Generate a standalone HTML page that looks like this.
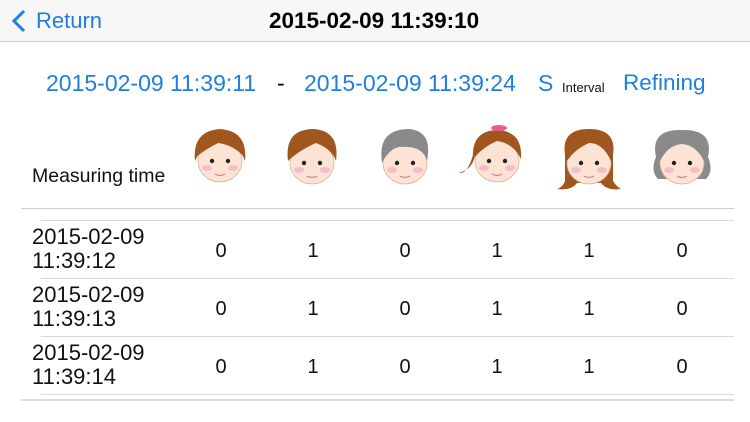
<!DOCTYPE html><html><head><style>
body{margin:0;width:750px;height:422px;background:#fff;position:relative;overflow:hidden;font-family:"Liberation Sans",sans-serif}
.a{position:absolute;white-space:nowrap}
.b{color:#1f7fe0}
.l{position:absolute;height:1px;background:#d8d8d8}
.t{font-size:22px;color:#111;line-height:24px}
.v{font-size:20px;color:#111;width:30px;text-align:center}
</style></head><body>
<div class="a" style="left:0;top:0;width:750px;height:41px;background:#f7f7f8;border-bottom:1px solid #c8c8cc"></div>
<svg class="a" style="left:11px;top:9px" width="16" height="24"><path d="M13 2 L3 12 L13 22" fill="none" stroke="#1f7fe0" stroke-width="3"/></svg>
<div class="a b" style="left:36px;top:8px;font-size:22px">Return</div>
<div class="a" style="left:269px;top:8px;font-size:22.5px;font-weight:bold;color:#000">2015-02-09 11:39:10</div>
<div class="a b" style="left:46px;top:70px;font-size:23px">2015-02-09 11:39:11</div>
<div class="a" style="left:277px;top:70px;font-size:23px">-</div>
<div class="a b" style="left:304px;top:70px;font-size:23px">2015-02-09 11:39:24</div>
<div class="a b" style="left:538px;top:70px;font-size:23px">S</div>
<div class="a" style="left:562px;top:80px;font-size:13px;color:#111">Interval</div>
<div class="a b" style="left:623px;top:70px;font-size:22.5px">Refining</div>
<div class="a" style="left:32px;top:165px;font-size:19.5px;color:#111">Measuring time</div>

<svg class="a" style="left:0;top:115px" width="750" height="85">
<defs><g id="f"><ellipse cx="0" cy="6" rx="22" ry="21" fill="#fde3d3" stroke="#d8b49c" stroke-width="0.8"/><circle cx="-8" cy="6" r="2.2" fill="#222"/><circle cx="8" cy="6" r="2.2" fill="#222"/><ellipse cx="-13" cy="13" rx="5" ry="3" fill="#f6bccc"/><ellipse cx="13" cy="13" rx="5" ry="3" fill="#f6bccc"/><path d="M-5 19 Q0 22 5 19" stroke="#d87a9a" stroke-width="1.3" fill="none"/></g></defs>
<g transform="translate(220,40)"><path d="M-25 6 Q-28 -24 0 -26 Q28 -24 25 6 L20 -6 Q0 -10 -20 -4Z" fill="#a0561f"/><use href="#f"/><path d="M-24 2 Q-26 -24 0 -25 Q26 -24 24 2 Q14 -10 -2 -12 Q-14 -6 -24 2Z" fill="#a0561f"/></g>
<g transform="translate(312,42)"><use href="#f"/><path d="M-24 4 Q-28 -28 2 -28 Q28 -26 24 4 Q20 -8 4 -14 Q-14 -6 -24 4Z" fill="#a0561f"/></g>
<g transform="translate(405,42)"><use href="#f"/><path d="M-23 6 Q-28 -28 4 -28 Q28 -26 22 4 Q18 -12 -6 -10 Q-16 -8 -23 6Z" fill="#8a8a8a"/></g>
<g transform="translate(497,40)"><path d="M-24 0 Q-30 20 -38 18 Q-24 14 -22 0Z" fill="#a0561f"/><use href="#f"/><path d="M-24 4 Q-26 -24 0 -25 Q26 -24 24 4 Q16 -12 0 -14 Q-14 -8 -24 4Z" fill="#a0561f"/><ellipse cx="2" cy="-27" rx="8" ry="3" fill="#e8608a"/></g>
<g transform="translate(589,42)"><path d="M-24 -2 Q-28 -28 0 -28 Q28 -28 24 -2 L24 24 Q28 30 32 32 Q18 34 12 26 L-12 26 Q-18 34 -32 32 Q-26 30 -24 24Z" fill="#a0561f"/><use href="#f"/><path d="M-22 4 Q-24 -22 2 -24 Q24 -22 22 4 Q14 -14 0 -14 Q-14 -8 -22 4Z" fill="#a0561f"/></g>
<g transform="translate(682,42)"><path d="M-26 0 Q-32 -28 0 -27 Q32 -28 26 0 Q32 14 24 22 L-24 22 Q-32 14 -26 0Z" fill="#8a8a8a"/><use href="#f"/><path d="M-22 4 Q-24 -22 0 -23 Q24 -22 22 4 Q14 -12 0 -13 Q-14 -12 -22 4Z" fill="#8a8a8a"/></g>
</svg>

<div class="l" style="left:21px;top:208px;width:713px;background:#cfcfcf"></div>
<div class="l" style="left:41px;top:220px;width:693px"></div>
<div class="l" style="left:41px;top:278px;width:693px"></div>
<div class="l" style="left:41px;top:336px;width:693px"></div>
<div class="l" style="left:41px;top:394px;width:693px"></div>
<div class="l" style="left:21px;top:399px;width:713px;height:2px;background:#dcdcdc"></div>

<div class="a t" style="left:32px;top:225px">2015-02-09<br>11:39:12</div>
<div class="a t" style="left:32px;top:283px">2015-02-09<br>11:39:13</div>
<div class="a t" style="left:32px;top:341px">2015-02-09<br>11:39:14</div>

<div class="a v" style="left:206px;top:240px">0</div><div class="a v" style="left:298px;top:240px">1</div><div class="a v" style="left:390px;top:240px">0</div><div class="a v" style="left:482px;top:240px">1</div><div class="a v" style="left:574px;top:240px">1</div><div class="a v" style="left:667px;top:240px">0</div>
<div class="a v" style="left:206px;top:298px">0</div><div class="a v" style="left:298px;top:298px">1</div><div class="a v" style="left:390px;top:298px">0</div><div class="a v" style="left:482px;top:298px">1</div><div class="a v" style="left:574px;top:298px">1</div><div class="a v" style="left:667px;top:298px">0</div>
<div class="a v" style="left:206px;top:356px">0</div><div class="a v" style="left:298px;top:356px">1</div><div class="a v" style="left:390px;top:356px">0</div><div class="a v" style="left:482px;top:356px">1</div><div class="a v" style="left:574px;top:356px">1</div><div class="a v" style="left:667px;top:356px">0</div>
</body></html>
